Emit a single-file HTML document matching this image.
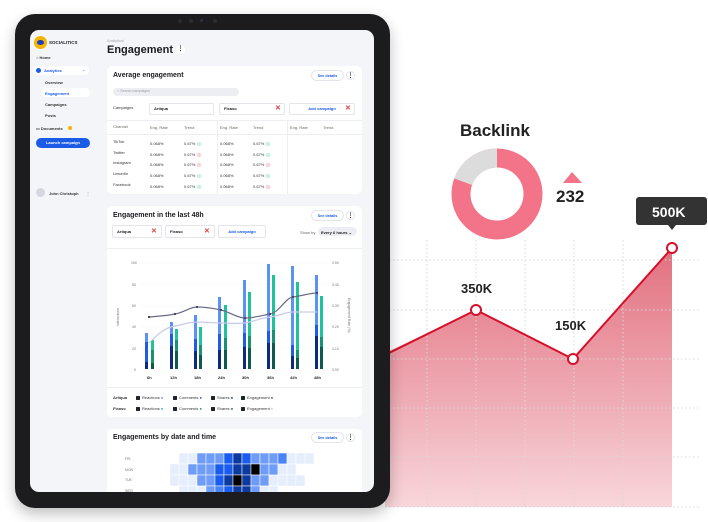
<!DOCTYPE html>
<html><head><meta charset="utf-8"><style>
*{margin:0;padding:0;box-sizing:border-box}
body{width:708px;height:522px;background:#fff;position:relative;overflow:hidden;font-family:"Liberation Sans",sans-serif;color:#1b1b1f}
.a{position:absolute}
.t{position:absolute;white-space:nowrap;font-size:4px;color:#333}
.card{position:absolute;background:#fff;border-radius:5px}
.pill{position:absolute;border:0.6px solid #e3e5ea;border-radius:6px;font-size:3.8px;color:#1a5ce6;font-weight:bold;text-align:center;background:#fff}
.dots{position:absolute;width:9px;height:9px;border-radius:50%;border:0.6px solid #e3e5ea;background:#fff;font-size:6px;text-align:center;line-height:8px;font-weight:bold}
.box{position:absolute;border:0.6px solid #e3e5ea;border-radius:2px;background:#fff;font-size:4px;font-weight:bold;padding:2px 0 0 4px}
.x{position:absolute;color:#e23b3b;font-size:7px;line-height:7px;font-weight:bold}
.up{display:inline-block;width:4px;height:4px;border-radius:1px;background:#c8f3e4;vertical-align:middle;margin-left:2px}
.dn{display:inline-block;width:4px;height:4px;border-radius:1px;background:#fbd4d6;vertical-align:middle;margin-left:2px}
.cb{display:inline-block;width:4px;height:4px;background:#1f2330;border-radius:0.6px;vertical-align:middle;margin-right:2px}
</style></head><body>

<!-- right chart -->
<svg class="a" style="left:0;top:0" width="708" height="522">
<defs>
<linearGradient id="g" x1="0" y1="0" x2="0" y2="1">
<stop offset="0" stop-color="#e2707f"/><stop offset="1" stop-color="#f8d6db"/></linearGradient>
</defs>
<path d="M385 353 L476 310 L573 359 L672 248 L672 507 L385 507 Z" fill="url(#g)"/>
<g stroke="#d8d8d8" stroke-width="1" stroke-dasharray="1.5 2.5">
<line x1="427" y1="240" x2="427" y2="507"/><line x1="476" y1="240" x2="476" y2="507"/><line x1="525" y1="240" x2="525" y2="507"/><line x1="574" y1="240" x2="574" y2="507"/><line x1="623" y1="240" x2="623" y2="507"/>
<line x1="385" y1="260" x2="700" y2="260"/><line x1="385" y1="310" x2="700" y2="310"/><line x1="385" y1="359" x2="700" y2="359"/><line x1="385" y1="408" x2="700" y2="408"/><line x1="385" y1="457" x2="700" y2="457"/><line x1="385" y1="507" x2="700" y2="507"/>
</g>
<path d="M385 355 L476 310 L573 359 L672 248" fill="none" stroke="#d7102a" stroke-width="2"/>
<circle cx="476" cy="310" r="5" fill="#fff" stroke="#d7102a" stroke-width="2"/>
<circle cx="573" cy="359" r="5" fill="#fff" stroke="#d7102a" stroke-width="2"/>
<circle cx="672" cy="248" r="5" fill="#fff" stroke="#d7102a" stroke-width="2"/>
<text x="461" y="293" font-family="Liberation Sans" font-weight="bold" font-size="13" fill="#222">350K</text>
<text x="555" y="330" font-family="Liberation Sans" font-weight="bold" font-size="13" fill="#222">150K</text>
<rect x="636" y="197" width="71" height="28" rx="3" fill="#333"/>
<path d="M668 225 L672 230 L676 225Z" fill="#333"/>
<text x="652" y="217" font-family="Liberation Sans" font-weight="bold" font-size="14" fill="#fff">500K</text>
<text x="460" y="136" font-family="Liberation Sans" font-weight="bold" font-size="17" fill="#222">Backlink</text>
<circle cx="497" cy="194" r="36" fill="none" stroke="#f37389" stroke-width="19"/>
<path d="M497 158 A36 36 0 0 0 463.2 181.7" fill="none" stroke="#dcdcdc" stroke-width="19"/>
<path d="M563 183 L572 172 L582 183Z" fill="#f37389"/>
<text x="556" y="202" font-family="Liberation Sans" font-weight="bold" font-size="17" fill="#222">232</text>
</svg>

<!-- tablet -->
<div class="a" style="left:15px;top:14px;width:375px;height:494px;background:#1c1c1e;border-radius:20px;box-shadow:0 6px 14px rgba(0,0,0,.25)"></div>
<div class="a" style="left:178px;top:19px;width:4px;height:4px;border-radius:50%;background:#2c2c30"></div>
<div class="a" style="left:189px;top:19px;width:4px;height:4px;border-radius:50%;background:#2c2c30"></div>
<div class="a" style="left:200px;top:19px;width:3px;height:3px;border-radius:50%;background:#2a3050"></div>
<div class="a" style="left:213px;top:19px;width:4px;height:4px;border-radius:50%;background:#2c2c30"></div>
<div class="a" style="left:30px;top:30px;width:344px;height:462px;background:#f4f5f8;border-radius:9px;overflow:hidden">
<div style="position:absolute;left:-30px;top:-30px;width:708px;height:522px">

<!-- sidebar -->
<div class="a" style="left:34px;top:36px;width:13px;height:13px;border-radius:50%;background:#f4b400"></div>
<div class="a" style="left:37px;top:40px;width:7px;height:5px;border-radius:50%;background:#1a3fc0"></div>
<div class="t" style="left:49px;top:40px;font-weight:bold;font-size:4.5px;color:#1b1b1f">SOCIALITICS</div>
<div class="t" style="left:36px;top:55px">⌂ <b>Home</b></div>
<div class="a" style="left:33px;top:66px;width:56px;height:9px;background:#fff;border-radius:5px"></div>
<div class="a" style="left:36px;top:68px;width:5px;height:5px;border-radius:50%;background:#1a5ce6"></div>
<div class="t" style="left:44px;top:68px;color:#1a5ce6;font-weight:bold">Analytics</div>
<div class="t" style="left:82px;top:67px;color:#1a5ce6">⌄</div>
<div class="t" style="left:45px;top:80px;font-weight:bold">Overview</div>
<div class="a" style="left:41px;top:88px;width:49px;height:9px;background:#fff;border-radius:5px"></div>
<div class="t" style="left:45px;top:91px;color:#1a5ce6;font-weight:bold">Engagement</div>
<div class="t" style="left:45px;top:102px;font-weight:bold">Campaigns</div>
<div class="t" style="left:45px;top:113px;font-weight:bold">Posts</div>
<div class="t" style="left:36px;top:126px;font-weight:bold">▭ Documents</div>
<div class="a" style="left:68px;top:126px;width:4px;height:4px;border-radius:50%;background:#f4b400"></div>
<div class="a" style="left:36px;top:138px;width:54px;height:10px;border-radius:5px;background:#1a5ce6;color:#fff;font-size:4px;font-weight:bold;text-align:center;line-height:10px">Launch campaign</div>
<div class="a" style="left:36px;top:188px;width:9px;height:9px;border-radius:50%;background:#d4d7de"></div>
<div class="t" style="left:49px;top:191px;font-weight:bold">John Christoph</div>
<div class="t" style="left:86px;top:191px">⋮</div>

<!-- header -->
<div class="t" style="left:107px;top:38px;color:#a3a7b0">Analytics/</div>
<div class="t" style="left:107px;top:44px;font-size:11px;font-weight:bold;color:#1b1b1f">Engagement</div>
<div class="dots" style="left:176px;top:45px;border:none">⋮</div>

<!-- card 1 -->
<div class="card" style="left:107px;top:66px;width:255px;height:128px"></div>
<div class="t" style="left:113px;top:72px;font-size:7px;font-weight:bold;color:#1b1b1f">Average engagement</div>
<div class="pill" style="left:311px;top:70px;width:33px;height:11px;line-height:10px">See details</div>
<div class="dots" style="left:346px;top:71px">⋮</div>
<div class="a" style="left:113px;top:88px;width:126px;height:8px;border-radius:4px;background:#eceef3"></div>
<div class="t" style="left:117px;top:89px;color:#9aa0aa;font-size:3.6px">○ Search campaigns</div>
<div class="t" style="left:113px;top:105px">Campaigns</div>
<div class="box" style="left:149px;top:103px;width:65px;height:12px">Artiqua</div>
<div class="box" style="left:219px;top:103px;width:66px;height:12px">Fixaso</div>
<div class="x" style="left:275px;top:105px">✕</div>
<div class="box" style="left:289px;top:103px;width:66px;height:12px;color:#1a5ce6;text-align:center;padding-left:0">Add campaign</div>
<div class="x" style="left:345px;top:105px">✕</div>
<div class="a" style="left:107px;top:120px;width:255px;height:0.6px;background:#eceef2"></div>
<div class="a" style="left:217px;top:120px;width:0.6px;height:74px;background:#eceef2"></div>
<div class="a" style="left:287px;top:120px;width:0.6px;height:74px;background:#eceef2"></div>
<div class="a" style="left:107px;top:134px;width:255px;height:0.6px;background:#eceef2"></div>
<div class="t" style="left:113px;top:124px;color:#666">Channel</div>
<div class="t" style="left:150px;top:125px;color:#666">Eng. Rate</div><div class="t" style="left:184px;top:125px;color:#666">Trend</div>
<div class="t" style="left:220px;top:125px;color:#666">Eng. Rate</div><div class="t" style="left:253px;top:125px;color:#666">Trend</div>
<div class="t" style="left:290px;top:125px;color:#666">Eng. Rate</div><div class="t" style="left:323px;top:125px;color:#666">Trend</div>
<div class="t" style="left:113px;top:139px">TikTok</div><div class="t" style="left:113px;top:150px">Twitter</div><div class="t" style="left:113px;top:160px">Instagram</div><div class="t" style="left:113px;top:171px">LinkedIn</div><div class="t" style="left:113px;top:182px">Facebook</div>
<div class="t" style="left:150px;top:141px">0.068%</div><div class="t" style="left:184px;top:141px">0.67%<span class="up"></span></div><div class="t" style="left:220px;top:141px">0.068%</div><div class="t" style="left:253px;top:141px">0.67%<span class="up"></span></div>
<div class="t" style="left:150px;top:152px">0.068%</div><div class="t" style="left:184px;top:152px">0.67%<span class="dn"></span></div><div class="t" style="left:220px;top:152px">0.068%</div><div class="t" style="left:253px;top:152px">0.67%<span class="up"></span></div>
<div class="t" style="left:150px;top:162px">0.068%</div><div class="t" style="left:184px;top:162px">0.67%<span class="dn"></span></div><div class="t" style="left:220px;top:162px">0.068%</div><div class="t" style="left:253px;top:162px">0.67%<span class="dn"></span></div>
<div class="t" style="left:150px;top:173px">0.068%</div><div class="t" style="left:184px;top:173px">0.67%<span class="up"></span></div><div class="t" style="left:220px;top:173px">0.068%</div><div class="t" style="left:253px;top:173px">0.67%<span class="up"></span></div>
<div class="t" style="left:150px;top:184px">0.068%</div><div class="t" style="left:184px;top:184px">0.67%<span class="up"></span></div><div class="t" style="left:220px;top:184px">0.068%</div><div class="t" style="left:253px;top:184px">0.67%<span class="dn"></span></div>

<!-- card 2 -->
<div class="card" style="left:107px;top:206px;width:255px;height:211px"></div>
<div class="t" style="left:113px;top:212px;font-size:7px;font-weight:bold;color:#1b1b1f">Engagement in the last 48h</div>
<div class="pill" style="left:311px;top:210px;width:33px;height:11px;line-height:10px">See details</div>
<div class="dots" style="left:346px;top:211px">⋮</div>
<div class="box" style="left:112px;top:225px;width:50px;height:13px;padding-top:3px">Artiqua</div><div class="x" style="left:151px;top:228px">✕</div>
<div class="box" style="left:165px;top:225px;width:50px;height:13px;padding-top:3px">Fixaso</div><div class="x" style="left:204px;top:228px">✕</div>
<div class="box" style="left:218px;top:225px;width:48px;height:13px;padding:3px 0 0;color:#1a5ce6;text-align:center">Add campaign</div>
<div class="t" style="left:300px;top:230px;color:#666">Show by</div>
<div class="a" style="left:318px;top:227px;width:39px;height:9px;border-radius:5px;background:#eceef3;font-size:4px;font-weight:bold;padding:2.5px 0 0 3px">Every 6 hours ⌄</div>
<div class="a" style="left:107px;top:248px;width:255px;height:0.6px;background:#eceef2"></div>
<div class="a" style="left:107px;top:387px;width:255px;height:0.6px;background:#eceef2"></div>
<svg class="a" style="left:107px;top:206px" width="255" height="211">
<g font-family="Liberation Sans" font-size="3.5" fill="#777">
<text x="24" y="58">100</text><text x="25" y="80">80</text><text x="25" y="101">60</text><text x="25" y="122">40</text><text x="25" y="144">20</text><text x="27" y="165">0</text>
<text x="225" y="58">0.50</text><text x="225" y="80">0.40</text><text x="225" y="101">0.30</text><text x="225" y="122">0.20</text><text x="225" y="144">0.10</text><text x="225" y="165">0.00</text>
<text transform="translate(12,120) rotate(-90)">Interactions</text>
<text transform="translate(241,92) rotate(90)">Engagement Rate (%)</text>
</g>
<g font-family="Liberation Sans" font-size="4" font-weight="bold" fill="#222">
<text x="40" y="173">6h</text><text x="63" y="173">12h</text><text x="87" y="173">18h</text><text x="111" y="173">24h</text><text x="135" y="173">30h</text><text x="160" y="173">36h</text><text x="183" y="173">42h</text><text x="207" y="173">48h</text>
</g>
<g stroke="#f0f1f4" stroke-width="0.5"><line x1="33" y1="57" x2="222" y2="57"/><line x1="33" y1="78" x2="222" y2="78"/><line x1="33" y1="100" x2="222" y2="100"/><line x1="33" y1="121" x2="222" y2="121"/><line x1="33" y1="142" x2="222" y2="142"/></g>
<g id="bars"></g>
</svg>
<!-- bars via divs -->
<svg class="a" style="left:0;top:0" width="400" height="420">
<g>
<!-- blue bars: x, top -->
<rect x="145" y="333" width="3" height="36" fill="#5b92f5"/><rect x="145" y="342" width="3" height="27" fill="#1f5ae8"/><rect x="145" y="362" width="3" height="7" fill="#0c2a80"/>
<rect x="170" y="322" width="3" height="47" fill="#5b92f5"/><rect x="170" y="334" width="3" height="35" fill="#1f5ae8"/><rect x="170" y="346" width="3" height="23" fill="#0c2a80"/>
<rect x="194" y="315" width="3" height="54" fill="#5b92f5"/><rect x="194" y="339" width="3" height="30" fill="#1f5ae8"/><rect x="194" y="351" width="3" height="18" fill="#0c2a80"/>
<rect x="218" y="297" width="3" height="72" fill="#5b92f5"/><rect x="218" y="334" width="3" height="35" fill="#1f5ae8"/><rect x="218" y="350" width="3" height="19" fill="#0c2a80"/>
<rect x="243" y="280" width="3" height="89" fill="#5b92f5"/><rect x="243" y="333" width="3" height="36" fill="#1f5ae8"/><rect x="243" y="347" width="3" height="22" fill="#0c2a80"/>
<rect x="267" y="264" width="3" height="105" fill="#5b92f5"/><rect x="267" y="331" width="3" height="38" fill="#1f5ae8"/><rect x="267" y="343" width="3" height="26" fill="#0c2a80"/>
<rect x="291" y="266" width="3" height="103" fill="#5b92f5"/><rect x="291" y="345" width="3" height="24" fill="#1f5ae8"/><rect x="291" y="356" width="3" height="13" fill="#0c2a80"/>
<rect x="315" y="275" width="3" height="94" fill="#5b92f5"/><rect x="315" y="325" width="3" height="44" fill="#1f5ae8"/><rect x="315" y="336" width="3" height="33" fill="#0c2a80"/>
<!-- green -->
<rect x="151" y="340" width="3" height="29" fill="#1fc39a"/><rect x="151" y="350" width="3" height="19" fill="#17936f"/><rect x="151" y="363" width="3" height="6" fill="#0d5c48"/>
<rect x="175" y="329" width="3" height="40" fill="#1fc39a"/><rect x="175" y="340" width="3" height="29" fill="#17936f"/><rect x="175" y="351" width="3" height="18" fill="#0d5c48"/>
<rect x="199" y="327" width="3" height="42" fill="#1fc39a"/><rect x="199" y="345" width="3" height="24" fill="#17936f"/><rect x="199" y="355" width="3" height="14" fill="#0d5c48"/>
<rect x="224" y="305" width="3" height="64" fill="#1fc39a"/><rect x="224" y="338" width="3" height="31" fill="#17936f"/><rect x="224" y="350" width="3" height="19" fill="#0d5c48"/>
<rect x="248" y="292" width="3" height="77" fill="#1fc39a"/><rect x="248" y="336" width="3" height="33" fill="#17936f"/><rect x="248" y="348" width="3" height="21" fill="#0d5c48"/>
<rect x="272" y="275" width="3" height="94" fill="#1fc39a"/><rect x="272" y="330" width="3" height="39" fill="#17936f"/><rect x="272" y="343" width="3" height="26" fill="#0d5c48"/>
<rect x="296" y="282" width="3" height="87" fill="#1fc39a"/><rect x="296" y="350" width="3" height="19" fill="#17936f"/><rect x="296" y="358" width="3" height="11" fill="#0d5c48"/>
<rect x="320" y="296" width="3" height="73" fill="#1fc39a"/><rect x="320" y="337" width="3" height="32" fill="#17936f"/><rect x="320" y="347" width="3" height="22" fill="#0d5c48"/>
</g>
<path d="M149 343 C160 332,165 328,175 326 S190 322,197 322 S212 323,221 323 S237 324,245 323 S260 318,270 317 S285 312,293 312 L317 312" fill="none" stroke="#c9c9e8" stroke-width="1.2"/>
<path d="M149 317 C160 316,165 316,175 314 S190 307,197 307 S212 308,221 310 S237 318,245 318 S260 316,270 314 S285 298,293 297 S310 293,317 293" fill="none" stroke="#6a6a86" stroke-width="1.2"/>
<g fill="#4a4a66"><rect x="148" y="316" width="2" height="2"/><rect x="174" y="313" width="2" height="2"/><rect x="196" y="306" width="2" height="2"/><rect x="220" y="309" width="2" height="2"/><rect x="244" y="317" width="2" height="2"/><rect x="269" y="313" width="2" height="2"/><rect x="292" y="296" width="2" height="2"/><rect x="316" y="292" width="2" height="2"/></g>
</svg>
<div class="t" style="left:113px;top:395px;font-weight:bold">Artiqua</div>
<div class="t" style="left:136px;top:395px"><span class="cb"></span>Reactions <span style="color:#5b92f5">●</span></div>
<div class="t" style="left:173px;top:395px"><span class="cb"></span>Comments <span style="color:#1f5ae8">●</span></div>
<div class="t" style="left:211px;top:395px"><span class="cb"></span>Shares <span style="color:#0c2a80">●</span></div>
<div class="t" style="left:241px;top:395px"><span class="cb"></span>Engagement <span style="color:#4a4a66">●</span></div>
<div class="t" style="left:113px;top:406px;font-weight:bold">Fixaso</div>
<div class="t" style="left:136px;top:406px"><span class="cb"></span>Reactions <span style="color:#1fc39a">●</span></div>
<div class="t" style="left:173px;top:406px"><span class="cb"></span>Comments <span style="color:#17936f">●</span></div>
<div class="t" style="left:211px;top:406px"><span class="cb"></span>Shares <span style="color:#0d5c48">●</span></div>
<div class="t" style="left:241px;top:406px"><span class="cb"></span>Engagement <span style="color:#c9c9e8">●</span></div>

<!-- card 3 -->
<div class="card" style="left:107px;top:429px;width:255px;height:80px"></div>
<div class="t" style="left:113px;top:434px;font-size:7px;font-weight:bold;color:#1b1b1f">Engagements by date and time</div>
<div class="pill" style="left:311px;top:432px;width:33px;height:11px;line-height:10px">See details</div>
<div class="dots" style="left:346px;top:433px">⋮</div>
<div class="t" style="left:125px;top:457px;color:#777;font-size:3.4px">FRI</div>
<div class="t" style="left:125px;top:468px;color:#777;font-size:3.4px">MON</div>
<div class="t" style="left:125px;top:478px;color:#777;font-size:3.4px">TUE</div>
<div class="t" style="left:125px;top:489px;color:#777;font-size:3.4px">WED</div>
<svg class="a" style="left:0;top:0" width="400" height="500" id="hm">
<g stroke="#fff" stroke-width="0.5">
<!-- row1 -->
<rect x="179" y="453" width="9" height="11" fill="#e6eefc"/><rect x="188" y="453" width="9" height="11" fill="#e6eefc"/><rect x="197" y="453" width="9" height="11" fill="#6f9cf7"/><rect x="206" y="453" width="9" height="11" fill="#6f9cf7"/><rect x="215" y="453" width="9" height="11" fill="#6f9cf7"/><rect x="224" y="453" width="9" height="11" fill="#1a5cf0"/><rect x="233" y="453" width="9" height="11" fill="#0d3a9e"/><rect x="242" y="453" width="9" height="11" fill="#1a5cf0"/><rect x="251" y="453" width="9" height="11" fill="#6f9cf7"/><rect x="260" y="453" width="9" height="11" fill="#6f9cf7"/><rect x="269" y="453" width="9" height="11" fill="#6f9cf7"/><rect x="278" y="453" width="9" height="11" fill="#4a83f5"/><rect x="287" y="453" width="9" height="11" fill="#e6eefc"/><rect x="296" y="453" width="9" height="11" fill="#e6eefc"/><rect x="305" y="453" width="9" height="11" fill="#e6eefc"/>
<!-- row2 -->
<rect x="170" y="464" width="9" height="11" fill="#e6eefc"/><rect x="179" y="464" width="9" height="11" fill="#e6eefc"/><rect x="188" y="464" width="9" height="11" fill="#6f9cf7"/><rect x="197" y="464" width="9" height="11" fill="#6f9cf7"/><rect x="206" y="464" width="9" height="11" fill="#6f9cf7"/><rect x="215" y="464" width="9" height="11" fill="#1a5cf0"/><rect x="224" y="464" width="9" height="11" fill="#1a5cf0"/><rect x="233" y="464" width="9" height="11" fill="#0d3a9e"/><rect x="242" y="464" width="9" height="11" fill="#0d3a9e"/><rect x="251" y="464" width="9" height="11" fill="#000"/><rect x="260" y="464" width="9" height="11" fill="#6f9cf7"/><rect x="269" y="464" width="9" height="11" fill="#6f9cf7"/><rect x="278" y="464" width="9" height="11" fill="#e6eefc"/><rect x="287" y="464" width="9" height="11" fill="#e6eefc"/>
<!-- row3 -->
<rect x="170" y="475" width="9" height="11" fill="#e6eefc"/><rect x="179" y="475" width="9" height="11" fill="#e6eefc"/><rect x="188" y="475" width="9" height="11" fill="#e6eefc"/><rect x="197" y="475" width="9" height="11" fill="#6f9cf7"/><rect x="206" y="475" width="9" height="11" fill="#6f9cf7"/><rect x="215" y="475" width="9" height="11" fill="#1a5cf0"/><rect x="224" y="475" width="9" height="11" fill="#0d3a9e"/><rect x="233" y="475" width="9" height="11" fill="#000"/><rect x="242" y="475" width="9" height="11" fill="#0d3a9e"/><rect x="251" y="475" width="9" height="11" fill="#6f9cf7"/><rect x="260" y="475" width="9" height="11" fill="#6f9cf7"/><rect x="269" y="475" width="9" height="11" fill="#e6eefc"/><rect x="278" y="475" width="9" height="11" fill="#e6eefc"/><rect x="287" y="475" width="9" height="11" fill="#e6eefc"/><rect x="296" y="475" width="9" height="11" fill="#e6eefc"/>
<!-- row4 -->
<rect x="179" y="486" width="9" height="11" fill="#e6eefc"/><rect x="188" y="486" width="9" height="11" fill="#e6eefc"/><rect x="197" y="486" width="9" height="11" fill="#e6eefc"/><rect x="206" y="486" width="9" height="11" fill="#6f9cf7"/><rect x="215" y="486" width="9" height="11" fill="#4a83f5"/><rect x="224" y="486" width="9" height="11" fill="#1a5cf0"/><rect x="233" y="486" width="9" height="11" fill="#0d3a9e"/><rect x="242" y="486" width="9" height="11" fill="#0d3a9e"/><rect x="251" y="486" width="9" height="11" fill="#6f9cf7"/><rect x="260" y="486" width="9" height="11" fill="#e6eefc"/><rect x="269" y="486" width="9" height="11" fill="#e6eefc"/>
</g>
</svg>
</div>
</div>
</body></html>
